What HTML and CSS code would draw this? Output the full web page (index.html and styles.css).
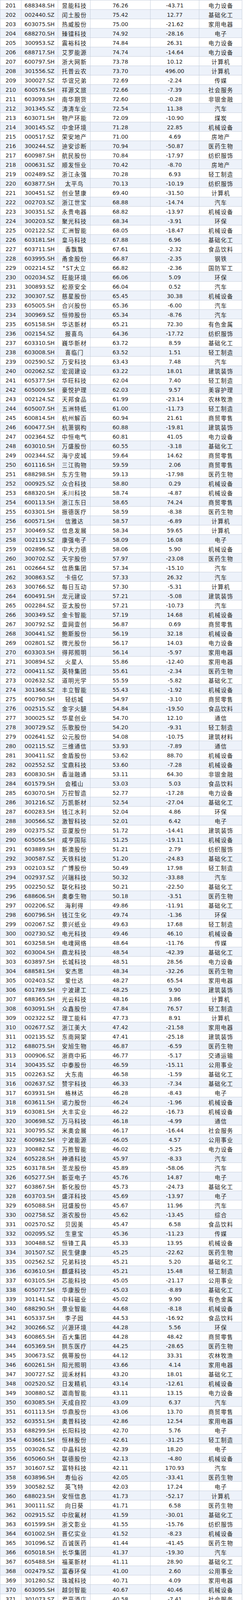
FILE: index.html
```html
<!DOCTYPE html>
<html lang="zh-CN">
<head>
<meta charset="utf-8">
<title>排名</title>
<link rel="stylesheet" href="styles.css">
</head>
<body>
<main class="page">
<div class="sheet">
<div class="row"><span>201</span><span>688348.SH</span><span class="cn">昱能科技</span><span>76.26</span><span>-43.71</span><span class="cn">电力设备</span></div>
<div class="row"><span>202</span><span>002440.SZ</span><span class="cn">闰土股份</span><span>75.42</span><span>12.77</span><span class="cn">基础化工</span></div>
<div class="row"><span>203</span><span>603075.SH</span><span class="cn">热威股份</span><span>75.00</span><span>-21.62</span><span class="cn">家用电器</span></div>
<div class="row"><span>204</span><span>688270.SH</span><span class="cn">臻镭科技</span><span>74.92</span><span>-28.16</span><span class="cn">电子</span></div>
<div class="row"><span>205</span><span>300953.SZ</span><span class="cn">震裕科技</span><span>74.84</span><span>26.31</span><span class="cn">电力设备</span></div>
<div class="row"><span>206</span><span>688717.SH</span><span class="cn">艾罗能源</span><span>74.74</span><span>-14.64</span><span class="cn">电力设备</span></div>
<div class="row"><span>207</span><span>600797.SH</span><span class="cn">浙大网新</span><span>73.78</span><span>10.12</span><span class="cn">计算机</span></div>
<div class="row"><span>208</span><span>301556.SZ</span><span class="cn">托普云农</span><span>73.70</span><span>496.00</span><span class="cn">计算机</span></div>
<div class="row"><span>209</span><span>300027.SZ</span><span class="cn">华谊兄弟</span><span>72.69</span><span>-2.24</span><span class="cn">传媒</span></div>
<div class="row"><span>210</span><span>600576.SH</span><span class="cn">祥源文旅</span><span>72.66</span><span>-7.39</span><span class="cn">社会服务</span></div>
<div class="row"><span>211</span><span>603093.SH</span><span class="cn">南华期货</span><span>72.60</span><span>-0.28</span><span class="cn">非银金融</span></div>
<div class="row"><span>212</span><span>301345.SZ</span><span class="cn">涛涛车业</span><span>72.54</span><span>11.38</span><span class="cn">汽车</span></div>
<div class="row"><span>213</span><span>603071.SH</span><span class="cn">物产环能</span><span>72.09</span><span>-10.90</span><span class="cn">煤炭</span></div>
<div class="row"><span>214</span><span>300145.SZ</span><span class="cn">中金环境</span><span>71.28</span><span>22.85</span><span class="cn">机械设备</span></div>
<div class="row"><span>215</span><span>000517.SZ</span><span class="cn">荣安地产</span><span>71.00</span><span>4.69</span><span class="cn">房地产</span></div>
<div class="row"><span>216</span><span>300244.SZ</span><span class="cn">迪安诊断</span><span>70.94</span><span>-50.87</span><span class="cn">医药生物</span></div>
<div class="row"><span>217</span><span>600987.SH</span><span class="cn">航民股份</span><span>70.84</span><span>-17.97</span><span class="cn">纺织服饰</span></div>
<div class="row"><span>218</span><span>000631.SZ</span><span class="cn">顺发恒业</span><span>70.42</span><span>-8.70</span><span class="cn">房地产</span></div>
<div class="row"><span>219</span><span>002489.SZ</span><span class="cn">浙江永强</span><span>70.28</span><span>6.93</span><span class="cn">轻工制造</span></div>
<div class="row"><span>220</span><span>603877.SH</span><span class="cn">太平鸟</span><span>70.13</span><span>-10.19</span><span class="cn">纺织服饰</span></div>
<div class="row"><span>221</span><span>300451.SZ</span><span class="cn">创业慧康</span><span>69.40</span><span>-31.50</span><span class="cn">计算机</span></div>
<div class="row"><span>222</span><span>002703.SZ</span><span class="cn">浙江世宝</span><span>68.88</span><span>-14.74</span><span class="cn">汽车</span></div>
<div class="row"><span>223</span><span>300351.SZ</span><span class="cn">永贵电器</span><span>68.82</span><span>-13.97</span><span class="cn">机械设备</span></div>
<div class="row"><span>224</span><span>300203.SZ</span><span class="cn">聚光科技</span><span>68.34</span><span>-3.91</span><span class="cn">环保</span></div>
<div class="row"><span>225</span><span>002122.SZ</span><span class="cn">汇洲智能</span><span>68.05</span><span>-18.47</span><span class="cn">机械设备</span></div>
<div class="row"><span>226</span><span>603181.SH</span><span class="cn">皇马科技</span><span>67.88</span><span>6.96</span><span class="cn">基础化工</span></div>
<div class="row"><span>227</span><span>603711.SH</span><span class="cn">香飘飘</span><span>67.61</span><span>-2.32</span><span class="cn">食品饮料</span></div>
<div class="row"><span>228</span><span>603995.SH</span><span class="cn">甬金股份</span><span>66.87</span><span>-2.35</span><span class="cn">钢铁</span></div>
<div class="row"><span>229</span><span>002214.SZ</span><span class="cn">*ST大立</span><span>66.82</span><span>-2.36</span><span class="cn">国防军工</span></div>
<div class="row"><span>230</span><span>002034.SZ</span><span class="cn">旺能环境</span><span>66.06</span><span>5.09</span><span class="cn">环保</span></div>
<div class="row"><span>231</span><span>300893.SZ</span><span class="cn">松原安全</span><span>66.04</span><span>0.52</span><span class="cn">汽车</span></div>
<div class="row"><span>232</span><span>300307.SZ</span><span class="cn">慈星股份</span><span>65.45</span><span>30.38</span><span class="cn">机械设备</span></div>
<div class="row"><span>233</span><span>605005.SH</span><span class="cn">合兴股份</span><span>65.36</span><span>-6.00</span><span class="cn">汽车</span></div>
<div class="row"><span>234</span><span>300969.SZ</span><span class="cn">恒帅股份</span><span>65.34</span><span>-8.76</span><span class="cn">汽车</span></div>
<div class="row"><span>235</span><span>605158.SH</span><span class="cn">华达新材</span><span>65.21</span><span>72.30</span><span class="cn">有色金属</span></div>
<div class="row"><span>236</span><span>002154.SZ</span><span class="cn">报喜鸟</span><span>64.36</span><span>-17.72</span><span class="cn">纺织服饰</span></div>
<div class="row"><span>237</span><span>603310.SH</span><span class="cn">巍华新材</span><span>63.72</span><span>8.59</span><span class="cn">基础化工</span></div>
<div class="row"><span>238</span><span>603008.SH</span><span class="cn">喜临门</span><span>63.52</span><span>1.51</span><span class="cn">轻工制造</span></div>
<div class="row"><span>239</span><span>002590.SZ</span><span class="cn">万安科技</span><span>63.43</span><span>7.48</span><span class="cn">汽车</span></div>
<div class="row"><span>240</span><span>002062.SZ</span><span class="cn">宏润建设</span><span>63.22</span><span>18.01</span><span class="cn">建筑装饰</span></div>
<div class="row"><span>241</span><span>605377.SH</span><span class="cn">华旺科技</span><span>62.04</span><span>7.40</span><span class="cn">轻工制造</span></div>
<div class="row"><span>242</span><span>605009.SH</span><span class="cn">豪悦护理</span><span>62.03</span><span>9.57</span><span class="cn">美容护理</span></div>
<div class="row"><span>243</span><span>002124.SZ</span><span class="cn">天邦食品</span><span>61.99</span><span>-23.14</span><span class="cn">农林牧渔</span></div>
<div class="row"><span>244</span><span>605007.SH</span><span class="cn">五洲特纸</span><span>61.00</span><span>-11.73</span><span class="cn">轻工制造</span></div>
<div class="row"><span>245</span><span>600814.SH</span><span class="cn">杭州解百</span><span>60.94</span><span>21.61</span><span class="cn">商贸零售</span></div>
<div class="row"><span>246</span><span>600477.SH</span><span class="cn">杭萧钢构</span><span>60.88</span><span>-19.81</span><span class="cn">建筑装饰</span></div>
<div class="row"><span>247</span><span>002364.SZ</span><span class="cn">中恒电气</span><span>60.81</span><span>41.05</span><span class="cn">电力设备</span></div>
<div class="row"><span>248</span><span>603010.SH</span><span class="cn">万盛股份</span><span>60.55</span><span>-3.18</span><span class="cn">基础化工</span></div>
<div class="row"><span>249</span><span>002344.SZ</span><span class="cn">海宁皮城</span><span>59.64</span><span>14.62</span><span class="cn">商贸零售</span></div>
<div class="row"><span>250</span><span>601116.SH</span><span class="cn">三江购物</span><span>59.59</span><span>2.06</span><span class="cn">商贸零售</span></div>
<div class="row"><span>251</span><span>688298.SH</span><span class="cn">东方生物</span><span>59.13</span><span>-17.98</span><span class="cn">医药生物</span></div>
<div class="row"><span>252</span><span>000925.SZ</span><span class="cn">众合科技</span><span>58.80</span><span>0.29</span><span class="cn">机械设备</span></div>
<div class="row"><span>253</span><span>688320.SH</span><span class="cn">禾川科技</span><span>58.74</span><span>-4.87</span><span class="cn">机械设备</span></div>
<div class="row"><span>254</span><span>600113.SH</span><span class="cn">浙江东日</span><span>58.65</span><span>74.24</span><span class="cn">商贸零售</span></div>
<div class="row"><span>255</span><span>603301.SH</span><span class="cn">振德医疗</span><span>58.59</span><span>-8.38</span><span class="cn">医药生物</span></div>
<div class="row"><span>256</span><span>600571.SH</span><span class="cn">信雅达</span><span>58.57</span><span>-6.89</span><span class="cn">计算机</span></div>
<div class="row"><span>257</span><span>300469.SZ</span><span class="cn">信息发展</span><span>58.34</span><span>59.65</span><span class="cn">计算机</span></div>
<div class="row"><span>258</span><span>002119.SZ</span><span class="cn">康强电子</span><span>58.09</span><span>16.08</span><span class="cn">电子</span></div>
<div class="row"><span>259</span><span>002896.SZ</span><span class="cn">中大力德</span><span>58.06</span><span>5.90</span><span class="cn">机械设备</span></div>
<div class="row"><span>260</span><span>300702.SZ</span><span class="cn">天宇股份</span><span>57.97</span><span>-23.08</span><span class="cn">医药生物</span></div>
<div class="row"><span>261</span><span>002664.SZ</span><span class="cn">信质集团</span><span>57.34</span><span>-15.10</span><span class="cn">汽车</span></div>
<div class="row"><span>262</span><span>300863.SZ</span><span class="cn">卡倍亿</span><span>57.33</span><span>26.32</span><span class="cn">汽车</span></div>
<div class="row"><span>263</span><span>300766.SZ</span><span class="cn">每日互动</span><span>57.30</span><span>-5.31</span><span class="cn">计算机</span></div>
<div class="row"><span>264</span><span>600491.SH</span><span class="cn">龙元建设</span><span>57.21</span><span>-5.08</span><span class="cn">建筑装饰</span></div>
<div class="row"><span>265</span><span>002284.SZ</span><span class="cn">亚太股份</span><span>57.21</span><span>-10.73</span><span class="cn">汽车</span></div>
<div class="row"><span>266</span><span>300349.SZ</span><span class="cn">金卡智能</span><span>57.19</span><span>14.68</span><span class="cn">机械设备</span></div>
<div class="row"><span>267</span><span>300792.SZ</span><span class="cn">壹网壹创</span><span>56.87</span><span>0.69</span><span class="cn">商贸零售</span></div>
<div class="row"><span>268</span><span>300441.SZ</span><span class="cn">鲍斯股份</span><span>56.19</span><span>32.18</span><span class="cn">机械设备</span></div>
<div class="row"><span>269</span><span>002801.SZ</span><span class="cn">微光股份</span><span>56.17</span><span>14.03</span><span class="cn">电力设备</span></div>
<div class="row"><span>270</span><span>603303.SH</span><span class="cn">得邦照明</span><span>56.14</span><span>-5.97</span><span class="cn">家用电器</span></div>
<div class="row"><span>271</span><span>300894.SZ</span><span class="cn">火星人</span><span>55.86</span><span>-12.40</span><span class="cn">家用电器</span></div>
<div class="row"><span>272</span><span>000411.SZ</span><span class="cn">英特集团</span><span>55.61</span><span>-2.34</span><span class="cn">医药生物</span></div>
<div class="row"><span>273</span><span>002632.SZ</span><span class="cn">道明光学</span><span>55.59</span><span>-5.82</span><span class="cn">基础化工</span></div>
<div class="row"><span>274</span><span>301368.SZ</span><span class="cn">丰立智能</span><span>55.43</span><span>-1.92</span><span class="cn">机械设备</span></div>
<div class="row"><span>275</span><span>600790.SH</span><span class="cn">轻纺城</span><span>54.97</span><span>-3.10</span><span class="cn">商贸零售</span></div>
<div class="row"><span>276</span><span>002515.SZ</span><span class="cn">金字火腿</span><span>54.84</span><span>-19.50</span><span class="cn">食品饮料</span></div>
<div class="row"><span>277</span><span>300025.SZ</span><span class="cn">华星创业</span><span>54.70</span><span>12.10</span><span class="cn">通信</span></div>
<div class="row"><span>278</span><span>300729.SZ</span><span class="cn">乐歌股份</span><span>54.20</span><span>-9.31</span><span class="cn">轻工制造</span></div>
<div class="row"><span>279</span><span>002641.SZ</span><span class="cn">公元股份</span><span>54.08</span><span>-10.75</span><span class="cn">建筑材料</span></div>
<div class="row"><span>280</span><span>002115.SZ</span><span class="cn">三维通信</span><span>53.93</span><span>-7.89</span><span class="cn">通信</span></div>
<div class="row"><span>281</span><span>300411.SZ</span><span class="cn">金盾股份</span><span>53.62</span><span>88.70</span><span class="cn">机械设备</span></div>
<div class="row"><span>282</span><span>002552.SZ</span><span class="cn">宝鼎科技</span><span>53.60</span><span>-7.28</span><span class="cn">机械设备</span></div>
<div class="row"><span>283</span><span>600830.SH</span><span class="cn">香溢融通</span><span>53.11</span><span>64.30</span><span class="cn">非银金融</span></div>
<div class="row"><span>284</span><span>601579.SH</span><span class="cn">会稽山</span><span>53.03</span><span>5.03</span><span class="cn">食品饮料</span></div>
<div class="row"><span>285</span><span>603070.SH</span><span class="cn">万控智造</span><span>52.77</span><span>-17.28</span><span class="cn">电力设备</span></div>
<div class="row"><span>286</span><span>301216.SZ</span><span class="cn">万凯新材</span><span>52.54</span><span>-27.04</span><span class="cn">基础化工</span></div>
<div class="row"><span>287</span><span>600283.SH</span><span class="cn">钱江水利</span><span>52.04</span><span>4.86</span><span class="cn">环保</span></div>
<div class="row"><span>288</span><span>300566.SZ</span><span class="cn">激智科技</span><span>52.01</span><span>6.42</span><span class="cn">电子</span></div>
<div class="row"><span>289</span><span>002375.SZ</span><span class="cn">亚厦股份</span><span>51.72</span><span>-14.41</span><span class="cn">建筑装饰</span></div>
<div class="row"><span>290</span><span>605056.SH</span><span class="cn">咸亨国际</span><span>51.25</span><span>-19.11</span><span class="cn">机械设备</span></div>
<div class="row"><span>291</span><span>603889.SH</span><span class="cn">新澳股份</span><span>51.21</span><span>2.79</span><span class="cn">纺织服饰</span></div>
<div class="row"><span>292</span><span>300587.SZ</span><span class="cn">天铁科技</span><span>51.20</span><span>-24.83</span><span class="cn">基础化工</span></div>
<div class="row"><span>293</span><span>002103.SZ</span><span class="cn">广博股份</span><span>50.49</span><span>17.98</span><span class="cn">轻工制造</span></div>
<div class="row"><span>294</span><span>002937.SZ</span><span class="cn">兴瑞科技</span><span>50.32</span><span>-33.88</span><span class="cn">汽车</span></div>
<div class="row"><span>295</span><span>002250.SZ</span><span class="cn">联化科技</span><span>50.21</span><span>-22.50</span><span class="cn">基础化工</span></div>
<div class="row"><span>296</span><span>688606.SH</span><span class="cn">奥泰生物</span><span>50.18</span><span>-3.51</span><span class="cn">医药生物</span></div>
<div class="row"><span>297</span><span>002206.SZ</span><span class="cn">海利得</span><span>49.86</span><span>-11.91</span><span class="cn">基础化工</span></div>
<div class="row"><span>298</span><span>600796.SH</span><span class="cn">钱江生化</span><span>49.74</span><span>-1.36</span><span class="cn">环保</span></div>
<div class="row"><span>299</span><span>002067.SZ</span><span class="cn">景兴纸业</span><span>49.63</span><span>17.68</span><span class="cn">轻工制造</span></div>
<div class="row"><span>300</span><span>002730.SZ</span><span class="cn">电光科技</span><span>49.46</span><span>46.10</span><span class="cn">机械设备</span></div>
<div class="row"><span>301</span><span>603258.SH</span><span class="cn">电魂网络</span><span>48.64</span><span>-11.76</span><span class="cn">传媒</span></div>
<div class="row"><span>302</span><span>603004.SH</span><span class="cn">鼎龙科技</span><span>48.54</span><span>-42.39</span><span class="cn">基础化工</span></div>
<div class="row"><span>303</span><span>603897.SH</span><span class="cn">长城科技</span><span>48.51</span><span>28.56</span><span class="cn">电力设备</span></div>
<div class="row"><span>304</span><span>688581.SH</span><span class="cn">安杰思</span><span>48.34</span><span>-32.26</span><span class="cn">医药生物</span></div>
<div class="row"><span>305</span><span>002403.SZ</span><span class="cn">爱仕达</span><span>48.27</span><span>65.54</span><span class="cn">家用电器</span></div>
<div class="row"><span>306</span><span>601789.SH</span><span class="cn">宁波建工</span><span>48.25</span><span>9.90</span><span class="cn">建筑装饰</span></div>
<div class="row"><span>307</span><span>688365.SH</span><span class="cn">光云科技</span><span>48.16</span><span>3.86</span><span class="cn">计算机</span></div>
<div class="row"><span>308</span><span>603091.SH</span><span class="cn">众鑫股份</span><span>47.84</span><span>76.57</span><span class="cn">轻工制造</span></div>
<div class="row"><span>309</span><span>002322.SZ</span><span class="cn">理工能科</span><span>47.73</span><span>8.91</span><span class="cn">计算机</span></div>
<div class="row"><span>310</span><span>002677.SZ</span><span class="cn">浙江美大</span><span>47.42</span><span>-21.58</span><span class="cn">家用电器</span></div>
<div class="row"><span>311</span><span>002135.SZ</span><span class="cn">东南网架</span><span>47.41</span><span>-25.18</span><span class="cn">建筑装饰</span></div>
<div class="row"><span>312</span><span>688075.SH</span><span class="cn">安旭生物</span><span>46.87</span><span>-6.59</span><span class="cn">医药生物</span></div>
<div class="row"><span>313</span><span>000906.SZ</span><span class="cn">浙商中拓</span><span>46.77</span><span>-5.17</span><span class="cn">交通运输</span></div>
<div class="row"><span>314</span><span>300435.SZ</span><span class="cn">中泰股份</span><span>46.59</span><span>-15.11</span><span class="cn">公用事业</span></div>
<div class="row"><span>315</span><span>002263.SZ</span><span class="cn">大东南</span><span>46.58</span><span>-1.59</span><span class="cn">基础化工</span></div>
<div class="row"><span>316</span><span>002637.SZ</span><span class="cn">赞宇科技</span><span>46.33</span><span>-7.34</span><span class="cn">基础化工</span></div>
<div class="row"><span>317</span><span>603931.SH</span><span class="cn">格林达</span><span>46.28</span><span>-8.43</span><span class="cn">电子</span></div>
<div class="row"><span>318</span><span>603611.SH</span><span class="cn">诺力股份</span><span>46.24</span><span>-1.96</span><span class="cn">机械设备</span></div>
<div class="row"><span>319</span><span>603081.SH</span><span class="cn">大丰实业</span><span>46.22</span><span>-16.73</span><span class="cn">机械设备</span></div>
<div class="row"><span>320</span><span>300698.SZ</span><span class="cn">万马科技</span><span>46.18</span><span>-4.99</span><span class="cn">通信</span></div>
<div class="row"><span>321</span><span>300795.SZ</span><span class="cn">米奥会展</span><span>46.17</span><span>-16.44</span><span class="cn">社会服务</span></div>
<div class="row"><span>322</span><span>600982.SH</span><span class="cn">宁波能源</span><span>46.05</span><span>4.57</span><span class="cn">公用事业</span></div>
<div class="row"><span>323</span><span>300882.SZ</span><span class="cn">万胜智能</span><span>46.02</span><span>-5.25</span><span class="cn">电力设备</span></div>
<div class="row"><span>324</span><span>605228.SH</span><span class="cn">神通科技</span><span>45.97</span><span>-8.33</span><span class="cn">汽车</span></div>
<div class="row"><span>325</span><span>603178.SH</span><span class="cn">圣龙股份</span><span>45.89</span><span>-58.06</span><span class="cn">汽车</span></div>
<div class="row"><span>326</span><span>605277.SH</span><span class="cn">新亚电子</span><span>45.76</span><span>14.87</span><span class="cn">电子</span></div>
<div class="row"><span>327</span><span>603867.SH</span><span class="cn">新化股份</span><span>45.73</span><span>-24.73</span><span class="cn">基础化工</span></div>
<div class="row"><span>328</span><span>603703.SH</span><span class="cn">盛洋科技</span><span>45.69</span><span>-13.97</span><span class="cn">电子</span></div>
<div class="row"><span>329</span><span>605088.SH</span><span class="cn">冠盛股份</span><span>45.67</span><span>11.96</span><span class="cn">汽车</span></div>
<div class="row"><span>330</span><span>002758.SZ</span><span class="cn">浙农股份</span><span>45.62</span><span>-13.45</span><span class="cn">综合</span></div>
<div class="row"><span>331</span><span>002570.SZ</span><span class="cn">贝因美</span><span>45.47</span><span>6.58</span><span class="cn">食品饮料</span></div>
<div class="row"><span>332</span><span>002095.SZ</span><span class="cn">生意宝</span><span>45.36</span><span>-11.23</span><span class="cn">传媒</span></div>
<div class="row"><span>333</span><span>300488.SZ</span><span class="cn">恒锋工具</span><span>45.33</span><span>13.95</span><span class="cn">机械设备</span></div>
<div class="row"><span>334</span><span>301507.SZ</span><span class="cn">民生健康</span><span>45.25</span><span>-22.62</span><span class="cn">医药生物</span></div>
<div class="row"><span>335</span><span>002562.SZ</span><span class="cn">兄弟科技</span><span>45.21</span><span>5.20</span><span class="cn">基础化工</span></div>
<div class="row"><span>336</span><span>603610.SH</span><span class="cn">麒盛科技</span><span>45.21</span><span>15.48</span><span class="cn">轻工制造</span></div>
<div class="row"><span>337</span><span>603105.SH</span><span class="cn">芯能科技</span><span>45.05</span><span>-21.17</span><span class="cn">公用事业</span></div>
<div class="row"><span>338</span><span>605077.SH</span><span class="cn">华康股份</span><span>45.03</span><span>-8.89</span><span class="cn">基础化工</span></div>
<div class="row"><span>339</span><span>301141.SZ</span><span class="cn">中科磁业</span><span>45.02</span><span>9.90</span><span class="cn">有色金属</span></div>
<div class="row"><span>340</span><span>688290.SH</span><span class="cn">景业智能</span><span>44.68</span><span>-8.18</span><span class="cn">机械设备</span></div>
<div class="row"><span>341</span><span>605337.SH</span><span class="cn">李子园</span><span>44.53</span><span>-16.92</span><span class="cn">食品饮料</span></div>
<div class="row"><span>342</span><span>300266.SZ</span><span class="cn">兴源环境</span><span>44.28</span><span>5.56</span><span class="cn">环保</span></div>
<div class="row"><span>343</span><span>600865.SH</span><span class="cn">百大集团</span><span>44.28</span><span>48.42</span><span class="cn">商贸零售</span></div>
<div class="row"><span>344</span><span>605369.SH</span><span class="cn">拱东医疗</span><span>44.25</span><span>-28.65</span><span class="cn">医药生物</span></div>
<div class="row"><span>345</span><span>300673.SZ</span><span class="cn">佩蒂股份</span><span>44.12</span><span>33.31</span><span class="cn">农林牧渔</span></div>
<div class="row"><span>346</span><span>600261.SH</span><span class="cn">阳光照明</span><span>43.66</span><span>4.14</span><span class="cn">家用电器</span></div>
<div class="row"><span>347</span><span>300727.SZ</span><span class="cn">润禾材料</span><span>43.20</span><span>18.01</span><span class="cn">基础化工</span></div>
<div class="row"><span>348</span><span>002520.SZ</span><span class="cn">日发精机</span><span>43.14</span><span>-12.61</span><span class="cn">机械设备</span></div>
<div class="row"><span>349</span><span>300880.SZ</span><span class="cn">迦南智能</span><span>43.11</span><span>13.15</span><span class="cn">电力设备</span></div>
<div class="row"><span>350</span><span>603085.SH</span><span class="cn">天成自控</span><span>43.09</span><span>6.37</span><span class="cn">汽车</span></div>
<div class="row"><span>351</span><span>601113.SH</span><span class="cn">华鼎股份</span><span>43.06</span><span>13.70</span><span class="cn">商贸零售</span></div>
<div class="row"><span>352</span><span>603551.SH</span><span class="cn">奥普科技</span><span>42.86</span><span>12.54</span><span class="cn">家用电器</span></div>
<div class="row"><span>353</span><span>688299.SH</span><span class="cn">长阳科技</span><span>42.70</span><span>5.76</span><span class="cn">电子</span></div>
<div class="row"><span>354</span><span>603661.SH</span><span class="cn">恒林股份</span><span>42.61</span><span>-31.25</span><span class="cn">轻工制造</span></div>
<div class="row"><span>355</span><span>003026.SZ</span><span class="cn">中晶科技</span><span>42.39</span><span>18.20</span><span class="cn">电子</span></div>
<div class="row"><span>356</span><span>605060.SH</span><span class="cn">联德股份</span><span>42.13</span><span>-4.80</span><span class="cn">机械设备</span></div>
<div class="row"><span>357</span><span>301607.SZ</span><span class="cn">富特科技</span><span>42.11</span><span>170.93</span><span class="cn">汽车</span></div>
<div class="row"><span>358</span><span>603896.SH</span><span class="cn">寿仙谷</span><span>42.05</span><span>-33.41</span><span class="cn">医药生物</span></div>
<div class="row"><span>359</span><span>300582.SZ</span><span class="cn">英飞特</span><span>42.03</span><span>17.24</span><span class="cn">电子</span></div>
<div class="row"><span>360</span><span>688023.SH</span><span class="cn">安恒信息</span><span>41.73</span><span>-52.17</span><span class="cn">计算机</span></div>
<div class="row"><span>361</span><span>300111.SZ</span><span class="cn">向日葵</span><span>41.71</span><span>6.58</span><span class="cn">医药生物</span></div>
<div class="row"><span>362</span><span>002915.SZ</span><span class="cn">中欣氟材</span><span>41.59</span><span>-30.01</span><span class="cn">基础化工</span></div>
<div class="row"><span>363</span><span>601599.SH</span><span class="cn">浙文影业</span><span>41.55</span><span>-15.76</span><span class="cn">纺织服饰</span></div>
<div class="row"><span>364</span><span>601002.SH</span><span class="cn">晋亿实业</span><span>41.52</span><span>-8.23</span><span class="cn">机械设备</span></div>
<div class="row"><span>365</span><span>301096.SZ</span><span class="cn">百诚医药</span><span>41.44</span><span>-41.45</span><span class="cn">医药生物</span></div>
<div class="row"><span>366</span><span>605018.SH</span><span class="cn">长华集团</span><span>41.37</span><span>-19.30</span><span class="cn">汽车</span></div>
<div class="row"><span>367</span><span>605488.SH</span><span class="cn">福莱新材</span><span>41.11</span><span>28.90</span><span class="cn">基础化工</span></div>
<div class="row"><span>368</span><span>002479.SZ</span><span class="cn">富春环保</span><span>41.00</span><span>2.60</span><span class="cn">公用事业</span></div>
<div class="row"><span>369</span><span>301280.SZ</span><span class="cn">珠城科技</span><span>40.71</span><span>4.09</span><span class="cn">家用电器</span></div>
<div class="row"><span>370</span><span>603095.SH</span><span class="cn">越剑智能</span><span>40.67</span><span>40.46</span><span class="cn">机械设备</span></div>
<div class="row"><span>371</span><span>301073.SZ</span><span class="cn">君亭酒店</span><span>40.58</span><span>-7.41</span><span class="cn">社会服务</span></div>
<div class="row"><span>372</span><span>300669.SZ</span><span class="cn">沪宁股份</span><span>40.22</span><span>34.91</span><span class="cn">机械设备</span></div>
<div class="row"><span>373</span><span>300439.SZ</span><span class="cn">美康生物</span><span>40.12</span><span>-8.94</span><span class="cn">医药生物</span></div>
<div class="row"><span>374</span><span>603687.SH</span><span class="cn">大胜达</span><span>40.10</span><span>-36.28</span><span class="cn">轻工制造</span></div>
<div class="row"><span>375</span><span>001380.SZ</span><span class="cn">华纬科技</span><span>40.08</span><span>-9.97</span><span class="cn">汽车</span></div>
<div class="row"><span>376</span><span>300426.SZ</span><span class="cn">华智数媒</span><span>39.96</span><span>-10.52</span><span class="cn">传媒</span></div>
<div class="row"><span>377</span><span>600526.SH</span><span class="cn">菲达环保</span><span>39.95</span><span>-9.11</span><span class="cn">环保</span></div>
<div class="row"><span>378</span><span>300550.SZ</span><span class="cn">和仁科技</span><span>39.78</span><span>1.27</span><span class="cn">计算机</span></div>
<div class="row"><span>379</span><span>603595.SH</span><span class="cn">东尼电子</span><span>39.72</span><span>-53.55</span><span class="cn">电子</span></div>
<div class="row"><span>380</span><span>603558.SH</span><span class="cn">健盛集团</span><span>39.70</span><span>17.00</span><span class="cn">纺织服饰</span></div>
<div class="row"><span>381</span><span>002082.SZ</span><span class="cn">万邦德</span><span>39.65</span><span>1.74</span><span class="cn">医药生物</span></div>
<div class="row"><span>382</span><span>603088.SH</span><span class="cn">宁波精达</span><span>39.63</span><span>8.64</span><span class="cn">机械设备</span></div>
<div class="row"><span>383</span><span>603015.SH</span><span class="cn">弘讯科技</span><span>39.49</span><span>1.66</span><span class="cn">机械设备</span></div>
<div class="row"><span>384</span><span>603600.SH</span><span class="cn">永艺股份</span><span>39.38</span><span>13.45</span><span class="cn">轻工制造</span></div>
<div class="row"><span>385</span><span>002849.SZ</span><span class="cn">威星智能</span><span>39.32</span><span>-4.30</span><span class="cn">机械设备</span></div>
<div class="row"><span>386</span><span>301252.SZ</span><span class="cn">同星科技</span><span>39.05</span><span>20.54</span><span class="cn">家用电器</span></div>
<div class="row"><span>387</span><span>002224.SZ</span><span class="cn">三力士</span><span>38.97</span><span>-14.62</span><span class="cn">基础化工</span></div>
<div class="row"><span>388</span><span>603823.SH</span><span class="cn">百合花</span><span>38.72</span><span>-4.02</span><span class="cn">基础化工</span></div>
<div class="row"><span>389</span><span>003041.SZ</span><span class="cn">真爱美家</span><span>38.62</span><span>65.05</span><span class="cn">纺织服饰</span></div>
<div class="row"><span>390</span><span>605378.SH</span><span class="cn">野马电池</span><span>38.46</span><span>17.33</span><span class="cn">电力设备</span></div>
<div class="row"><span>391</span><span>603391.SH</span><span class="cn">力聚热能</span><span>38.30</span><span>8.62</span><span class="cn">机械设备</span></div>
<div class="row"><span>392</span><span>600052.SH</span><span class="cn">东望时代</span><span>38.16</span><span>-8.50</span><span class="cn">公用事业</span></div>
<div class="row"><span>393</span><span>603520.SH</span><span class="cn">司太立</span><span>38.10</span><span>-38.06</span><span class="cn">医药生物</span></div>
<div class="row"><span>394</span><span>600512.SH</span><span class="cn">腾达建设</span><span>37.89</span><span>-3.66</span><span class="cn">建筑装饰</span></div>
<div class="row"><span>395</span><span>603213.SH</span><span class="cn">镇洋发展</span><span>37.87</span><span>-17.11</span><span class="cn">基础化工</span></div>
<div class="row"><span>396</span><span>605166.SH</span><span class="cn">聚合顺</span><span>37.77</span><span>24.23</span><span class="cn">基础化工</span></div>
<div class="row"><span>397</span><span>605268.SH</span><span class="cn">王力安防</span><span>37.77</span><span>-11.02</span><span class="cn">轻工制造</span></div>
<div class="row"><span>398</span><span>000607.SZ</span><span class="cn">华媒控股</span><span>37.76</span><span>-18.48</span><span class="cn">传媒</span></div>
<div class="row"><span>399</span><span>300277.SZ</span><span class="cn">海联讯</span><span>37.75</span><span>30.59</span><span class="cn">计算机</span></div>
<div class="row"><span>400</span><span>603618.SH</span><span class="cn">杭电股份</span><span>37.54</span><span>-14.35</span><span class="cn">电力设备</span></div>
<div class="row"><span>401</span><span>603822.SH</span><span class="cn">嘉澳环保</span><span>37.46</span><span>-75.33</span><span class="cn">基础化工</span></div>
</div>
</main>
</body>
</html>
```

FILE: styles.css
```css
html, body {
  margin: 0;
  padding: 0;
  background: #ffffff;
}

body {
  font-family: "DejaVu Sans", "Noto Sans CJK SC", sans-serif;
  font-size: 14px;
  color: #222222;
}

.page {
  display: block;
  height: 4813px;
  overflow: hidden;
}

.sheet {
  width: 621px;
  border-top: 1px solid #c7cfdd;
  border-left: 1px solid #c7cfdd;
  box-sizing: border-box;
}

.row {
  display: grid;
  grid-template-columns: 54px 94px 83px 154px 125px 110px;
  height: 24px;
  box-sizing: border-box;
  border-bottom: 1px solid #c7cfdd;
  overflow: hidden;
}

.row:nth-child(even) {
  background: #edf2fa;
}

.row span {
  display: block;
  height: 23px;
  line-height: 27px;
  text-align: center;
  white-space: nowrap;
  overflow: hidden;
  border-right: 1px solid #c7cfdd;
  box-sizing: border-box;
}

.row .cn {
  font-family: "Noto Sans CJK SC", "DejaVu Sans", sans-serif;
  font-size: 14.5px;
  line-height: 25px;
  letter-spacing: 1.5px;
  padding-left: 1.5px;
}
```
